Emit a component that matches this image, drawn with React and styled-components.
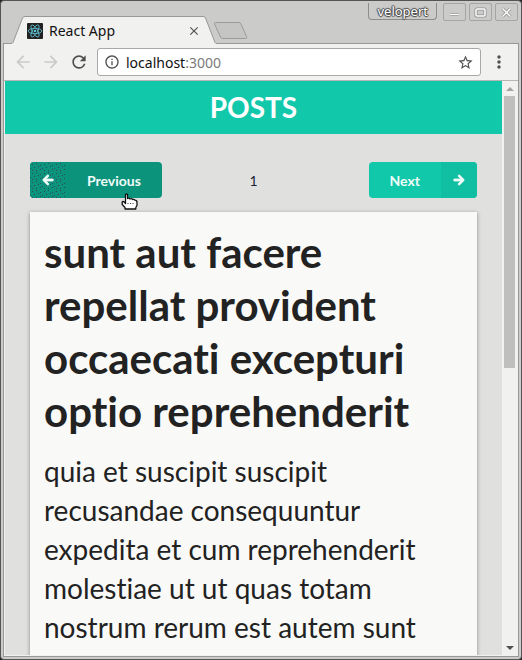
import styled, { createGlobalStyle } from "styled-components"
import { FaArrowLeft, FaArrowRight } from "react-icons/fa"
import { MdArrowBack, MdArrowForward, MdRefresh, MdInfoOutline, MdStarBorder, MdMoreVert, MdClose } from "react-icons/md"

const post = {
  title: "sunt aut facere repellat provident occaecati excepturi optio reprehenderit",
  body: "quia et suscipit suscipit recusandae consequuntur expedita et cum reprehenderit molestiae ut ut quas totam nostrum rerum est autem sunt",
}

const ReactLogo = () => (
  <svg width="16" height="16" viewBox="0 0 16 16" aria-hidden="true">
    <rect width="16" height="16" rx="1" fill="#222" />
    <g fill="none" stroke="#61c5d8" strokeWidth=".8">
      <ellipse cx="8" cy="8" rx="6.8" ry="2.6" transform="rotate(0 8 8)" />
      <ellipse cx="8" cy="8" rx="6.8" ry="2.6" transform="rotate(60 8 8)" />
      <ellipse cx="8" cy="8" rx="6.8" ry="2.6" transform="rotate(120 8 8)" />
    </g>
    <circle cx="8" cy="8" r="1.3" fill="#61c5d8" />
  </svg>
)

const TabEdge = ({ flip }) => (
  <svg width="14" height="28" viewBox="0 0 14 28" aria-hidden="true">
    <g transform={flip ? "translate(14 0) scale(-1 1)" : undefined}>
      <path d="M0 28 L2 26.5 L11.5 2 Q12 .5 14 .5 V28 Z" fill="#f1f1f0" />
      <path d="M0 27.5 Q1.5 27.5 2 26.5 L11.5 2 Q12 .5 14 .5" fill="none" stroke="#989897" />
    </g>
  </svg>
)

const NewTabShape = () => (
  <svg width="36" height="18" viewBox="0 0 36 18" aria-hidden="true">
    <path d="M2.5 .5 H26 Q27.5 .5 28 2 L33.5 14.5 Q34.5 16.5 32.5 16.5 H10 Q8 16.5 7.5 15 L1.5 2 Q1 .5 2.5 .5 Z" fill="#c5c5c4" stroke="#9b9b9a" />
  </svg>
)

const HandCursor = () => (
  <svg width="17" height="17" viewBox="0 0 17 17" aria-hidden="true">
    <path
      d="M4.500 8.500 V1.800 Q5.500 .2 6.500 1.800 V5.500 Q8 4.500 9 6 Q10.500 5 11.800 6.500 Q13 6 14 7.200 Q16 7.200 16 9.500 V12.500 L14.800 14.500 V16 H4 V14.500 L1.200 11.500 V9 Q2 8 3.200 9 L4.500 10.500 Z"
      fill="#fff"
      stroke="#111"
      strokeWidth="1.300"
      strokeLinejoin="round"
    />
    <path d="M6.500 10.500 h1 M9 10.500 h1 M11.500 10.500 h1" stroke="#333" />
  </svg>
)

const WindowGlyph = ({ children }) => (
  <svg width="13" height="11" viewBox="0 0 13 11" fill="none" aria-hidden="true">
    <g stroke="#8e8e8d" strokeWidth="3">{children}</g>
    <g stroke="#fff" strokeWidth="1.500">{children}</g>
  </svg>
)

const DotTexture = () => (
  <Texture aria-hidden="true">
    <defs>
      <pattern id="dots" width="12" height="9" patternUnits="userSpaceOnUse">
        <path d="M2 2h1v1h-1z M6 1h1v1h-1z M10 3h1v1h-1z M4 5h1v1h-1z M8 4h1v1h-1z M0 6h1v1h-1z M6 8h1v1h-1z M10 7h1v1h-1z M2 8h1v1h-1z" fill="#2a4a63" />
      </pattern>
    </defs>
    <rect width="100%" height="100%" fill="url(#dots)" />
  </Texture>
)

const App = () => {
  return (
    <>
      <GlobalStyle />
      <Frame>
        <TabStrip>
          <Tab>
            <TabEdge />
            <TabBody>
              <ReactLogo />
              <TabTitle>React App</TabTitle>
              <IconButton aria-label="Close tab"><MdClose size={14} /></IconButton>
            </TabBody>
            <TabEdge flip />
          </Tab>
          <NewTab aria-label="New tab"><NewTabShape /></NewTab>
          <WindowControls>
            <UserButton>velopert</UserButton>
            <WindowButton aria-label="Minimize">
              <WindowGlyph><path d="M2 7.500 H11" /></WindowGlyph>
            </WindowButton>
            <WindowButton aria-label="Maximize">
              <WindowGlyph><rect x="2" y="2" width="9" height="7" rx="1" /></WindowGlyph>
            </WindowButton>
            <WindowButton aria-label="Close">
              <WindowGlyph><path d="M2.500 1.500 L10.500 9.500 M10.500 1.500 L2.500 9.500" /></WindowGlyph>
            </WindowButton>
          </WindowControls>
        </TabStrip>
        <Browser>
          <Toolbar>
            <IconButton aria-label="Back" disabled><MdArrowBack size={20} /></IconButton>
            <IconButton aria-label="Forward" disabled><MdArrowForward size={20} /></IconButton>
            <IconButton aria-label="Reload"><MdRefresh size={20} /></IconButton>
            <AddressBar>
              <MdInfoOutline size={16} />
              <a href="#address"><span>localhost</span>:3000</a>
              <IconButton aria-label="Bookmark"><MdStarBorder size={17} /></IconButton>
            </AddressBar>
            <IconButton aria-label="Menu"><MdMoreVert size={20} /></IconButton>
          </Toolbar>
          <Viewport>
            <Page>
              <Header><h1>POSTS</h1></Header>
              <Content>
                <Navigator>
                  <NavButton $hover>
                    <NavIcon $side="left"><DotTexture /><FaArrowLeft /></NavIcon>
                    <NavLabel>Previous</NavLabel>
                    <Pointer><HandCursor /></Pointer>
                  </NavButton>
                  <PageNumber>1</PageNumber>
                  <NavButton>
                    <NavLabel>Next</NavLabel>
                    <NavIcon $side="right"><FaArrowRight /></NavIcon>
                  </NavButton>
                </Navigator>
                <Post>
                  <h2>{post.title}</h2>
                  <p>{post.body}</p>
                </Post>
              </Content>
            </Page>
            <Scrollbar aria-hidden="true">
              <ScrollArrow />
              <ScrollTrack><ScrollThumb /></ScrollTrack>
              <ScrollArrow $down />
            </Scrollbar>
          </Viewport>
        </Browser>
      </Frame>
    </>
  )
}

export default App

const GlobalStyle = createGlobalStyle`
  *{
    box-sizing: border-box;
  }
  body{
    margin: 0;
    background-color: #222;
  }
  h1, h2, p{
    margin: 0;
  }
  button{
    font: inherit;
    color: inherit;
    border: none;
    padding: 0;
    cursor: pointer;
  }
  svg{
    display: block;
    flex-shrink: 0;
  }
`

const Frame = styled.div`
  display: flex;
  flex-direction: column;
  height: 100vh;
  padding: 0 2px 2px;
  border: 1px solid #555;
  border-radius: 4px;
  background-color: #cbcbca;
  font-family: "Noto Sans", sans-serif;
  font-size: 14px;
`

const TabStrip = styled.div`
  display: flex;
  align-items: flex-end;
  height: 42px;
  padding-left: 8px;
`

const Tab = styled.div`
  position: relative;
  z-index: 1;
  display: flex;
  height: 28px;
  margin-bottom: -1px;
`

const TabBody = styled.div`
  display: flex;
  align-items: center;
  gap: 6px;
  width: 178px;
  padding: 0 2px;
  border-top: 1px solid #989897;
  background-color: #f1f1f0;
`

const TabTitle = styled.span`
  flex: 1;
  color: #111;
`

const IconButton = styled.button`
  background: none;
  color: #505050;
  &:disabled{
    color: #cacac9;
  }
`

const NewTab = styled.button`
  margin: 0 0 3px -4px;
  background: none;
`

const WindowControls = styled.div`
  display: flex;
  gap: 3px;
  align-self: flex-start;
  margin-left: auto;
  padding: 2px 1px 0 0;
`

const UserButton = styled.button`
  height: 17px;
  margin-right: 3px;
  padding: 0 8px;
  border: 1px solid #8d8d8c;
  border-top: none;
  border-radius: 0 0 4px 4px;
  background: none;
  color: #fff;
  font-size: 13px;
  line-height: 16px;
  text-shadow: 1px 0 1px #444, -1px 0 1px #444, 0 1px 1px #444, 0 -1px 1px #444;
`

const WindowButton = styled.button`
  display: flex;
  align-items: center;
  justify-content: center;
  width: 23px;
  height: 18px;
  border: 1px solid #a5a5a4;
  border-radius: 2px;
  background: none;
`

const Browser = styled.div`
  display: flex;
  flex: 1;
  flex-direction: column;
  min-height: 0;
  border: 1px solid #989897;
`

const Toolbar = styled.div`
  display: flex;
  align-items: center;
  gap: 8px;
  height: 37px;
  padding: 0 9px;
  border-bottom: 1px solid #b5b5b4;
  background-color: #f1f1f0;
`

const AddressBar = styled.div`
  display: flex;
  flex: 1;
  align-items: center;
  gap: 6px;
  height: 28px;
  padding: 0 6px;
  border: 1px solid #a8a8a7;
  border-radius: 3px;
  background-color: #fff;
  color: #505050;
  a{
    flex: 1;
    color: #7b7b7a;
    text-decoration: none;
  }
  span{
    color: #111;
  }
`

const Viewport = styled.div`
  display: flex;
  flex: 1;
  min-height: 0;
  padding: 0 1px 1px;
  background-color: #f1f1f0;
`

const Page = styled.main`
  flex: 1;
  overflow: hidden;
  background-color: #e0e0df;
  font-family: Lato, sans-serif;
  font-variant-ligatures: none;
`

const Header = styled.header`
  background-color: #11c8ab;
  color: #fff;
  text-align: center;
  h1{
    font-size: 28px;
    line-height: 53px;
  }
`

const Content = styled.section`
  padding: 28px 25px;
`

const Navigator = styled.nav`
  display: grid;
  grid-template-columns: 1fr auto 1fr;
  align-items: center;
  margin-bottom: 14px;
  button:last-child{
    justify-self: end;
  }
`

const NavButton = styled.button`
  position: relative;
  display: flex;
  align-items: center;
  justify-self: start;
  height: 36px;
  border-radius: 4px;
  background-color: ${({ $hover }) => ($hover ? "#0b937b" : "#11c8ab")};
  color: #effcf9;
  font-weight: bold;
`

const NavLabel = styled.span`
  padding: 0 21px;
`

const NavIcon = styled.span`
  position: relative;
  display: flex;
  align-items: center;
  justify-content: center;
  width: 36px;
  height: 36px;
  border-radius: ${({ $side }) => ($side === "left" ? "4px 0 0 4px" : "0 4px 4px 0")};
  background-color: ${({ $side }) => ($side === "left" ? "#0b937b" : "#10bea2")};
  overflow: hidden;
  svg:last-child{
    position: relative;
    width: 12px;
    height: 12px;
    stroke: currentColor;
    stroke-width: 40px;
    overflow: visible;
  }
`

const Texture = styled.svg`
  position: absolute;
  inset: 0;
  width: 100%;
  height: 100%;
`

const Pointer = styled.span`
  position: absolute;
  right: 24px;
  bottom: -12px;
`

const PageNumber = styled.span`
  color: #1b1f38;
`

const Post = styled.article`
  padding: 14px;
  background-color: #f9f9f7;
  box-shadow: 0 1px 4px rgba(0, 0, 0, .4);
  color: #222;
  h2{
    margin-bottom: 14px;
    font-size: 42px;
    line-height: 53px;
  }
  p{
    font-size: 28px;
    line-height: 39px;
  }
`

const Scrollbar = styled.div`
  display: flex;
  flex-direction: column;
  width: 15px;
  background-color: #f1f1f0;
`

const ScrollArrow = styled.span`
  display: flex;
  align-items: center;
  justify-content: center;
  height: 15px;
  &::before{
    content: "";
    border: 4px solid transparent;
    border-top: ${({ $down }) => ($down ? "4px solid #505050" : "none")};
    border-bottom: ${({ $down }) => ($down ? "none" : "4px solid #a3a3a2")};
  }
`

const ScrollTrack = styled.div`
  flex: 1;
  padding: 0 2px;
`

const ScrollThumb = styled.div`
  height: 50%;
  background-color: #bfbfbe;
`
